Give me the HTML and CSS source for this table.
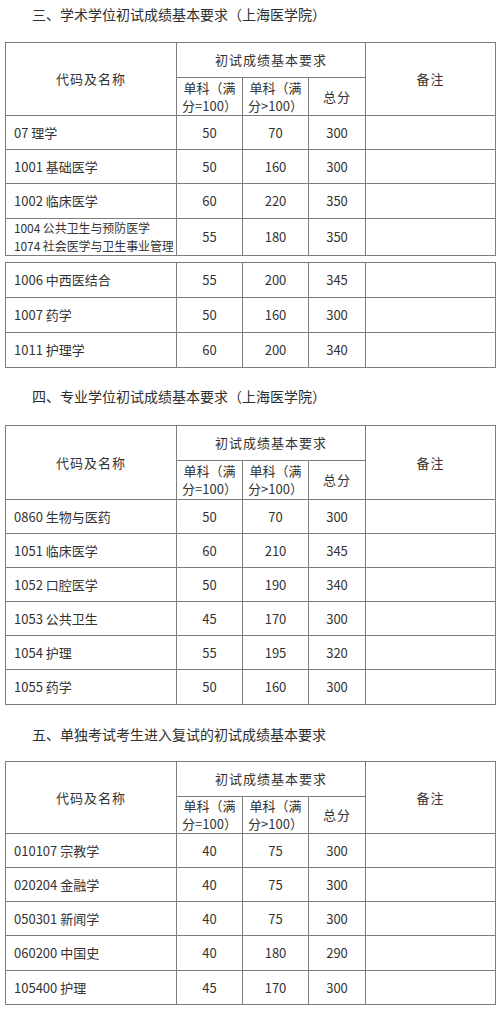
FILE: index.html
```html
<!DOCTYPE html>
<html lang="zh-CN">
<head>
<meta charset="utf-8">
<title>初试成绩基本要求</title>
<link rel="stylesheet" href="styles.css">
</head>
<body>
<div class="page">
  <h2 class="heading h1">三、学术学位初试成绩基本要求（上海医学院）</h2>
  <table class="grid">
    <colgroup><col class="c1"><col class="c2"><col class="c3"><col class="c4"><col class="c5"></colgroup>
    <tr class="hr1"><td rowspan="2" class="ctr hd">代码及名称</td><td colspan="3" class="ctr hd">初试成绩基本要求</td><td rowspan="2" class="ctr hd">备注</td></tr>
    <tr class="hr2"><td class="ctr sub">单科（满<br>分=100）</td><td class="ctr sub">单科（满<br>分&gt;100）</td><td class="ctr hd">总分</td></tr>
    <tr class="r34"><td class="name">07 理学</td><td class="ctr">50</td><td class="ctr">70</td><td class="ctr">300</td><td></td></tr>
    <tr class="r34"><td class="name">1001 基础医学</td><td class="ctr">50</td><td class="ctr">160</td><td class="ctr">300</td><td></td></tr>
    <tr class="r35"><td class="name">1002 临床医学</td><td class="ctr">60</td><td class="ctr">220</td><td class="ctr">350</td><td></td></tr>
    <tr class="r37"><td class="name two">1004 公共卫生与预防医学<br>1074 社会医学与卫生事业管理</td><td class="ctr">55</td><td class="ctr">180</td><td class="ctr">350</td><td></td></tr>
  </table>
  <table class="grid split">
    <colgroup><col class="c1"><col class="c2"><col class="c3"><col class="c4"><col class="c5"></colgroup>
    <tr class="r35"><td class="name">1006 中西医结合</td><td class="ctr">55</td><td class="ctr">200</td><td class="ctr">345</td><td></td></tr>
    <tr class="r35"><td class="name">1007 药学</td><td class="ctr">50</td><td class="ctr">160</td><td class="ctr">300</td><td></td></tr>
    <tr class="r35"><td class="name">1011 护理学</td><td class="ctr">60</td><td class="ctr">200</td><td class="ctr">340</td><td></td></tr>
  </table>

  <h2 class="heading h2">四、专业学位初试成绩基本要求（上海医学院）</h2>
  <table class="grid">
    <colgroup><col class="c1"><col class="c2"><col class="c3"><col class="c4"><col class="c5"></colgroup>
    <tr class="hr1"><td rowspan="2" class="ctr hd">代码及名称</td><td colspan="3" class="ctr hd">初试成绩基本要求</td><td rowspan="2" class="ctr hd">备注</td></tr>
    <tr class="hr2b"><td class="ctr sub">单科（满<br>分=100）</td><td class="ctr sub">单科（满<br>分&gt;100）</td><td class="ctr hd">总分</td></tr>
    <tr class="r34"><td class="name">0860 生物与医药</td><td class="ctr">50</td><td class="ctr">70</td><td class="ctr">300</td><td></td></tr>
    <tr class="r34"><td class="name">1051 临床医学</td><td class="ctr">60</td><td class="ctr">210</td><td class="ctr">345</td><td></td></tr>
    <tr class="r34"><td class="name">1052 口腔医学</td><td class="ctr">50</td><td class="ctr">190</td><td class="ctr">340</td><td></td></tr>
    <tr class="r34"><td class="name">1053 公共卫生</td><td class="ctr">45</td><td class="ctr">170</td><td class="ctr">300</td><td></td></tr>
    <tr class="r34"><td class="name">1054 护理</td><td class="ctr">55</td><td class="ctr">195</td><td class="ctr">320</td><td></td></tr>
    <tr class="r35"><td class="name">1055 药学</td><td class="ctr">50</td><td class="ctr">160</td><td class="ctr">300</td><td></td></tr>
  </table>

  <h2 class="heading h3">五、单独考试考生进入复试的初试成绩基本要求</h2>
  <table class="grid">
    <colgroup><col class="c1"><col class="c2"><col class="c3"><col class="c4"><col class="c5"></colgroup>
    <tr class="hr1"><td rowspan="2" class="ctr hd">代码及名称</td><td colspan="3" class="ctr hd">初试成绩基本要求</td><td rowspan="2" class="ctr hd">备注</td></tr>
    <tr class="hr2c"><td class="ctr sub">单科（满<br>分=100）</td><td class="ctr sub">单科（满<br>分&gt;100）</td><td class="ctr hd">总分</td></tr>
    <tr class="r34"><td class="name">010107 宗教学</td><td class="ctr">40</td><td class="ctr">75</td><td class="ctr">300</td><td></td></tr>
    <tr class="r34"><td class="name">020204 金融学</td><td class="ctr">40</td><td class="ctr">75</td><td class="ctr">300</td><td></td></tr>
    <tr class="r34"><td class="name">050301 新闻学</td><td class="ctr">40</td><td class="ctr">75</td><td class="ctr">300</td><td></td></tr>
    <tr class="r35"><td class="name">060200 中国史</td><td class="ctr">40</td><td class="ctr">180</td><td class="ctr">290</td><td></td></tr>
    <tr class="r34"><td class="name">105400 护理</td><td class="ctr">45</td><td class="ctr">170</td><td class="ctr">300</td><td></td></tr>
  </table>
</div>
</body>
</html>
```

FILE: styles.css
```css
html, body {
  margin: 0;
  padding: 0;
  background: #ffffff;
}
body {
  font-family: "Noto Sans CJK SC", "Noto Sans", sans-serif;
  color: #333333;
  font-size: 13px;
}
.page {
  width: 500px;
  padding: 0;
}
.heading {
  margin: 0;
  padding-left: 32px;
  font-size: 14px;
  font-weight: normal;
  line-height: 28px;
  height: 28px;
  color: #2e2e2e;
}
.h1 { margin-bottom: 14px; }
.h2 { margin-top: 14px; margin-bottom: 15px; }
.h3 { margin-top: 15px; margin-bottom: 13px; }

.grid {
  border-collapse: collapse;
  table-layout: fixed;
  width: 491px;
  margin-left: 5px;
}
.grid.split { margin-top: 6px; }
.grid td {
  border: 1px solid #7d7d7d;
  padding: 0;
  line-height: 18px;
  vertical-align: middle;
}
.c1 { width: 171px; }
.c2 { width: 66px; }
.c3 { width: 66px; }
.c4 { width: 57px; }
.c5 { width: 130px; }
.ctr { text-align: center; }
.hd { letter-spacing: 1px; }
.name {
  padding-left: 8px !important;
  text-align: left;
  white-space: nowrap;
}
.name.two {
  font-size: 12px;
  letter-spacing: -0.1px;
}
.sub { line-height: 18px; }
.hr1 { height: 35px; }
.hr2 { height: 38px; }
.hr2b { height: 39px; }
.hr2c { height: 37px; }
.r34 { height: 34px; }
.r35 { height: 35px; }
.r37 { height: 37px; }
```
